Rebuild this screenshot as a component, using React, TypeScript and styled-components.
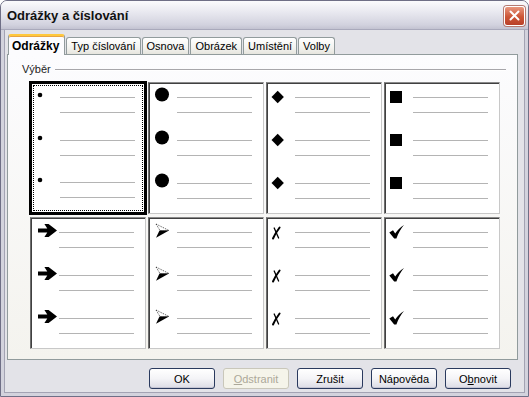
import React from "react";
import styled, { createGlobalStyle, css } from "styled-components";

const GlobalStyle = createGlobalStyle`
  html, body {
    margin: 0;
    padding: 0;
    background: #ffffff;
  }
  body {
    font-family: "Liberation Sans", Arial, sans-serif;
    font-size: 11px;
    color: #000;
  }
`;

const Window = styled.div`
  width: 529px;
  height: 397px;
  box-sizing: border-box;
  display: flex;
  flex-direction: column;
  border: 1px solid #6f6f86;
  border-radius: 7px 7px 0 0;
  background: #e3e3e8;
  overflow: hidden;
`;

const TitleBar = styled.div`
  height: 28px;
  flex: none;
  display: flex;
  align-items: center;
  justify-content: space-between;
  padding: 0 3px 0 6px;
  background: linear-gradient(#fbfbfd 0%, #e6e6ee 45%, #d2d2de 85%, #c3c3d1 100%);
  border-bottom: 1px solid #a9a9bb;
`;

const Title = styled.span`
  font-size: 13px;
  font-weight: bold;
  color: #111;
  padding-top: 1px;
`;

const CloseButton = styled.div`
  width: 19px;
  height: 18px;
  border: 1px solid #fff;
  border-radius: 3px;
  background: linear-gradient(#e8977f, #cc5536 55%, #b8402a);
  box-shadow: 0 0 0 1px #b47a72;
  display: flex;
  align-items: center;
  justify-content: center;
  margin-top: 1px;
`;

const Frame = styled.div`
  flex: 1;
  display: flex;
  flex-direction: column;
  border: 3px solid #d3d3dd;
  border-top: none;
  box-shadow: inset 1px 0 0 #a3a3b3, inset -1px 0 0 #a3a3b3, inset 0 -1px 0 #a3a3b3;
  padding: 4px 7px 0 3px;
`;

const TabStrip = styled.div`
  height: 20px;
  display: flex;
  align-items: flex-end;
  padding-left: 1px;
  position: relative;
  z-index: 1;
`;

const Tab = styled.div<{ $active?: boolean }>`
  height: 17px;
  box-sizing: border-box;
  padding: 0 4px;
  margin-right: 1px;
  display: flex;
  align-items: center;
  border: 1px solid #919b9c;
  border-bottom: none;
  border-radius: 3px 3px 0 0;
  background: linear-gradient(#ffffff, #f3f3f0 60%, #e6e5de);
  white-space: nowrap;
  ${(p) =>
    p.$active &&
    css`
      height: 21px;
      margin-bottom: -1px;
      padding: 0 5px 0 3px;
      font-weight: bold;
      font-size: 12px;
      background: #fcfcfe;
      border-top: 2px solid #ffc83c;
      box-shadow: inset 0 1px 0 #e7a443;
    `}
`;

const Panel = styled.div`
  height: 306px;
  box-sizing: border-box;
  border: 1px solid #919b9c;
  background: linear-gradient(#fcfcfe, #f4f3ee);
  padding: 7px 11px 0 22px;
  display: flex;
  flex-direction: column;
`;

const Legend = styled.div`
  height: 14px;
  display: flex;
  align-items: center;
  margin-left: -8px;
  gap: 4px;
  color: #222;
`;

const Rule = styled.div`
  flex: 1;
  height: 1px;
  background: #a7a6aa;
  box-shadow: 0 1px 0 #ffffff;
`;

const Grid = styled.div`
  margin-top: 6px;
  display: grid;
  grid-template-columns: repeat(4, 116px);
  grid-auto-rows: 132px;
  column-gap: 2px;
  row-gap: 3px;
`;

const Cell = styled.div<{ $selected?: boolean }>`
  box-sizing: border-box;
  background: #fff;
  border: 1px solid;
  border-color: #8a8a8a #c8c8c8 #c8c8c8 #6e6e6e;
  box-shadow: inset 1px 1px 0 #404040;
  padding-top: 14px;
  display: flex;
  flex-direction: column;
  gap: 13px;
  ${(p) =>
    p.$selected &&
    css`
      border: 2px solid #000;
      box-shadow: 0 0 0 1px #000;
      outline: 1px dotted #000;
      outline-offset: -4px;
      padding-top: 13px;
    `}
`;

const Item = styled.div`
  height: 30px;
  display: grid;
  grid-template-columns: 28px 75px;
`;

const BulletBox = styled.div`
  height: 30px;
  margin-top: -14px;
`;

const Lines = styled.div`
  display: flex;
  flex-direction: column;
  gap: 14px;
`;

const Line = styled.div`
  height: 1px;
  background: #b4b4b4;
`;

const Footer = styled.div`
  display: flex;
  justify-content: flex-end;
  gap: 8px;
  margin-top: 8px;
  padding-right: 7px;
`;

const Button = styled.div<{ $disabled?: boolean }>`
  width: 66px;
  height: 21px;
  box-sizing: border-box;
  border: 1px solid #2a3a5e;
  border-radius: 3px;
  background: linear-gradient(#ffffff, #f4f4f7 50%, #dcdce5);
  box-shadow: inset 0 -1px 0 #c6c6d4;
  display: flex;
  align-items: center;
  justify-content: center;
  u {
    text-decoration: underline;
  }
  ${(p) =>
    p.$disabled &&
    css`
      border-color: #c9c7ba;
      background: #f5f4ea;
      box-shadow: none;
      color: #aca899;
    `}
`;

type Kind = "dot" | "circle" | "diamond" | "square" | "arrow" | "arrowhead" | "cross" | "check";

function Bullet({ kind }: { kind: Kind }) {
  return (
    <svg width="28" height="30" viewBox="0 0 28 30">
      {kind === "dot" && <circle cx="8" cy="12" r="2.3" fill="#000" />}
      {kind === "circle" && <circle cx="13" cy="11.5" r="7" fill="#000" />}
      {kind === "diamond" && <polygon points="10.7,7.8 16.9,14 10.7,20.2 4.5,14" fill="#000" />}
      {kind === "square" && <rect x="5" y="8" width="12" height="12" fill="#000" />}
      {kind === "arrow" && (
        <path d="M7 10.4 H16.3 L13.4 6 H17.6 L26 12.5 L17.6 19 H13.4 L16.3 14.6 H7 Z" fill="#000" />
      )}
      {kind === "arrowhead" && (
        <g>
          <path d="M7 6 L20 12.5 L11 12.5 Z" fill="#fff" stroke="#000" strokeWidth="0.7" strokeDasharray="1 1" />
          <path d="M10.5 12.5 L20 12.5 L7 19.8 Z" fill="#000" />
        </g>
      )}
      {kind === "cross" && (
        <g stroke="#000" strokeLinecap="round" fill="none">
          <path d="M6 20.5 C8 16 10 13 12.6 9.5" strokeWidth="2" />
          <path d="M7.2 10 C8.5 13 10 16.5 11.6 20" strokeWidth="1.3" />
        </g>
      )}
      {kind === "check" && (
        <path d="M4.3 14.4 L8 12.2 L10.2 15.6 C12.6 12 15.4 9 19 7 C16 10.6 13.4 15 11.4 20.4 L9.2 20.4 Z" fill="#000" />
      )}
    </svg>
  );
}

const kinds: Kind[] = ["dot", "circle", "diamond", "square", "arrow", "arrowhead", "cross", "check"];

function CloseIcon() {
  return (
    <svg width="11" height="11" viewBox="0 0 11 11">
      <path d="M1.5 1.5 L9.5 9.5 M9.5 1.5 L1.5 9.5" stroke="#fff" strokeWidth="2" strokeLinecap="round" />
    </svg>
  );
}

export default function App() {
  const tabs = ["Odrážky", "Typ číslování", "Osnova", "Obrázek", "Umístění", "Volby"];
  return (
    <>
      <GlobalStyle />
      <Window>
        <TitleBar>
          <Title>Odrážky a číslování</Title>
          <CloseButton>
            <CloseIcon />
          </CloseButton>
        </TitleBar>
        <Frame>
          <TabStrip>
            {tabs.map((t, i) => (
              <Tab key={t} $active={i === 0}>
                {t}
              </Tab>
            ))}
          </TabStrip>
          <Panel>
            <Legend>
              <span>Výběr</span>
              <Rule />
            </Legend>
            <Grid>
              {kinds.map((k, i) => (
                <Cell key={k} $selected={i === 0}>
                  {[0, 1, 2].map((n) => (
                    <Item key={n}>
                      <BulletBox>
                        <Bullet kind={k} />
                      </BulletBox>
                      <Lines>
                        <Line />
                        <Line />
                      </Lines>
                    </Item>
                  ))}
                </Cell>
              ))}
            </Grid>
          </Panel>
          <Footer>
            <Button>OK</Button>
            <Button $disabled>
              <u>O</u>dstranit
            </Button>
            <Button>Zrušit</Button>
            <Button>Nápověda</Button>
            <Button>
              O<u>b</u>novit
            </Button>
          </Footer>
        </Frame>
      </Window>
    </>
  );
}
